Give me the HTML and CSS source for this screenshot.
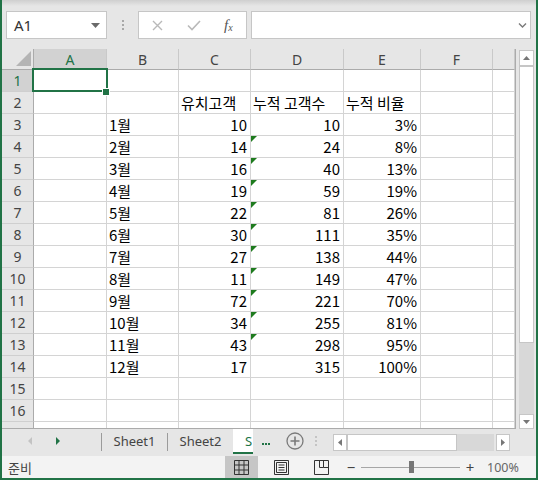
FILE: index.html
```html
<!DOCTYPE html>
<html>
<head>
  <meta charset="utf-8">
  <title>Excel - Sheet3</title>
  <link rel="stylesheet" href="styles.css">
</head>
<body>
  <div class="app">

    <div class="formula-bar">
      <div class="name-box">
        <span>A1</span>
        <svg width="9" height="5" viewBox="0 0 9 5"><path d="M0 0h9L4.5 5z" fill="#6a6a6a"/></svg>
      </div>
      <div class="grip"><i></i><i></i><i></i></div>
      <div class="fx-buttons">
        <svg class="fx-btn" width="11" height="11" viewBox="0 0 11 11"><path d="M1 1l9 9M10 1l-9 9" stroke="#b9b9b9" stroke-width="1.4" fill="none"/></svg>
        <svg class="fx-btn" width="14" height="11" viewBox="0 0 14 11"><path d="M1 5.5l4 4L13 1" stroke="#b9b9b9" stroke-width="1.6" fill="none"/></svg>
        <span class="fx-label">f<sub>x</sub></span>
      </div>
      <div class="formula-input">
        <svg width="9" height="5" viewBox="0 0 9 5"><path d="M1 0.5l3.5 3.5L8 0.5" stroke="#7a7a7a" stroke-width="1.4" fill="none"/></svg>
      </div>
    </div>

    <div class="main">
      <div class="sheet">
        <div class="row head">
          <div class="corner"><svg width="15" height="15" viewBox="0 0 15 15"><path d="M15 0V15H0z" fill="#b4b4b4"/></svg></div>
          <div class="ch sel">A</div><div class="ch">B</div><div class="ch">C</div><div class="ch">D</div><div class="ch">E</div><div class="ch">F</div><div class="ch"></div>
        </div>
        <div class="row">
          <div class="rh sel">1</div>
          <div class="c active"></div><div class="c"></div><div class="c"></div><div class="c"></div><div class="c"></div><div class="c"></div><div class="c"></div>
        </div>
        <div class="row">
          <div class="rh">2</div>
          <div class="c"></div><div class="c"></div><div class="c">유치고객</div><div class="c">누적 고객수</div><div class="c">누적 비율</div><div class="c"></div><div class="c"></div>
        </div>
        <div class="row">
          <div class="rh">3</div>
          <div class="c"></div><div class="c">1월</div><div class="c num">10</div><div class="c num">10</div><div class="c num">3%</div><div class="c"></div><div class="c"></div>
        </div>
        <div class="row">
          <div class="rh">4</div>
          <div class="c"></div><div class="c">2월</div><div class="c num">14</div><div class="c num warn">24</div><div class="c num">8%</div><div class="c"></div><div class="c"></div>
        </div>
        <div class="row">
          <div class="rh">5</div>
          <div class="c"></div><div class="c">3월</div><div class="c num">16</div><div class="c num warn">40</div><div class="c num">13%</div><div class="c"></div><div class="c"></div>
        </div>
        <div class="row">
          <div class="rh">6</div>
          <div class="c"></div><div class="c">4월</div><div class="c num">19</div><div class="c num warn">59</div><div class="c num">19%</div><div class="c"></div><div class="c"></div>
        </div>
        <div class="row">
          <div class="rh">7</div>
          <div class="c"></div><div class="c">5월</div><div class="c num">22</div><div class="c num warn">81</div><div class="c num">26%</div><div class="c"></div><div class="c"></div>
        </div>
        <div class="row">
          <div class="rh">8</div>
          <div class="c"></div><div class="c">6월</div><div class="c num">30</div><div class="c num warn">111</div><div class="c num">35%</div><div class="c"></div><div class="c"></div>
        </div>
        <div class="row">
          <div class="rh">9</div>
          <div class="c"></div><div class="c">7월</div><div class="c num">27</div><div class="c num warn">138</div><div class="c num">44%</div><div class="c"></div><div class="c"></div>
        </div>
        <div class="row">
          <div class="rh">10</div>
          <div class="c"></div><div class="c">8월</div><div class="c num">11</div><div class="c num warn">149</div><div class="c num">47%</div><div class="c"></div><div class="c"></div>
        </div>
        <div class="row">
          <div class="rh">11</div>
          <div class="c"></div><div class="c">9월</div><div class="c num">72</div><div class="c num warn">221</div><div class="c num">70%</div><div class="c"></div><div class="c"></div>
        </div>
        <div class="row">
          <div class="rh">12</div>
          <div class="c"></div><div class="c">10월</div><div class="c num">34</div><div class="c num warn">255</div><div class="c num">81%</div><div class="c"></div><div class="c"></div>
        </div>
        <div class="row">
          <div class="rh">13</div>
          <div class="c"></div><div class="c">11월</div><div class="c num">43</div><div class="c num warn">298</div><div class="c num">95%</div><div class="c"></div><div class="c"></div>
        </div>
        <div class="row">
          <div class="rh">14</div>
          <div class="c"></div><div class="c">12월</div><div class="c num">17</div><div class="c num">315</div><div class="c num">100%</div><div class="c"></div><div class="c"></div>
        </div>
        <div class="row">
          <div class="rh">15</div>
          <div class="c"></div><div class="c"></div><div class="c"></div><div class="c"></div><div class="c"></div><div class="c"></div><div class="c"></div>
        </div>
        <div class="row">
          <div class="rh">16</div>
          <div class="c"></div><div class="c"></div><div class="c"></div><div class="c"></div><div class="c"></div><div class="c"></div><div class="c"></div>
        </div>
        <div class="row">
          <div class="rh"></div>
          <div class="c"></div><div class="c"></div><div class="c"></div><div class="c"></div><div class="c"></div><div class="c"></div><div class="c"></div>
        </div>
      </div>

      <div class="vscroll">
        <div class="sb-btn"><svg width="7" height="4" viewBox="0 0 7 4"><path d="M0 4h7L3.5 0z" fill="#777"/></svg></div>
        <div class="sb-thumb"></div>
        <div class="sb-track"></div>
        <div class="sb-btn"><svg width="7" height="4" viewBox="0 0 7 4"><path d="M0 0h7L3.5 4z" fill="#777"/></svg></div>
      </div>
    </div>

    <div class="tabbar">
      <div class="tab-nav">
        <svg width="4" height="8" viewBox="0 0 4 8"><path d="M4 0v8L0 4z" fill="#c3c3c3"/></svg>
        <svg width="4" height="8" viewBox="0 0 4 8"><path d="M0 0v8l4-4z" fill="#217346"/></svg>
      </div>
      <div class="tab-sep"></div>
      <div class="tab">Sheet1</div>
      <div class="tab-sep"></div>
      <div class="tab">Sheet2</div>
      <div class="tab active">S</div>
      <div class="tab-more"><i></i><i></i><i></i></div>
      <div class="tab-add">
        <svg width="18" height="18" viewBox="0 0 18 18"><circle cx="9" cy="9" r="8" stroke="#7a7a7a" stroke-width="1.3" fill="none"/><path d="M9 4.5v9M4.5 9h9" stroke="#7a7a7a" stroke-width="1.6"/></svg>
      </div>
      <div class="grip light"><i></i><i></i><i></i></div>
      <div class="hscroll">
        <div class="sb-btn"><svg width="4" height="7" viewBox="0 0 4 7"><path d="M4 0v7L0 3.5z" fill="#777"/></svg></div>
        <div class="sb-thumb"></div>
        <div class="sb-track"></div>
        <div class="sb-btn"><svg width="4" height="7" viewBox="0 0 4 7"><path d="M0 0v7l4-3.5z" fill="#777"/></svg></div>
      </div>
    </div>

    <div class="statusbar">
      <div class="status-text">준비</div>
      <div class="view-btn on">
        <svg width="15" height="15" viewBox="0 0 15 15"><path d="M0.5 0.5h14v14h-14zM0.5 5h14M0.5 10h14M5 0.5v14M10 0.5v14" stroke="#333" fill="none"/></svg>
      </div>
      <div class="view-btn">
        <svg width="15" height="15" viewBox="0 0 15 15"><path d="M0.5 0.5h14v14h-14zM2.5 2.5h10v10h-10zM4.5 5h6M4.5 7.5h6M4.5 10h6" stroke="#333" fill="none"/></svg>
      </div>
      <div class="view-btn">
        <svg width="15" height="15" viewBox="0 0 15 15"><path d="M0.5 0.5h14v14h-14zM5.5 0.5v7h4v-7M9.5 7.5h5" stroke="#333" fill="none"/></svg>
      </div>
      <div class="zoom">
        <span class="zoom-sign">−</span>
        <div class="slider"><div class="slider-thumb"></div></div>
        <span class="zoom-sign">+</span>
        <span class="zoom-value">100%</span>
      </div>
    </div>

  </div>
</body>
</html>
```

FILE: styles.css
```css
body {
  margin: 0;
  background-color: #e6e6e6;
  font-family: "Noto Sans", "Noto Sans CJK KR", sans-serif;
  color: #444;
}

.app {
  width: 538px;
  height: 480px;
  box-sizing: border-box;
  border-left: 2px solid #217346;
  border-right: 2px solid #217346;
  border-bottom: 2px solid #217346;
  background-color: #e6e6e6;
  display: flex;
  flex-direction: column;
  overflow: hidden;
}

/* formula bar */

.formula-bar {
  height: 49px;
  flex: none;
  display: flex;
  align-items: flex-start;
  padding-top: 11px;
  box-sizing: border-box;
  background: linear-gradient(#cfcfcf, #e6e6e6 6px);
}

.name-box {
  margin-left: 4px;
  width: 101px;
  height: 28px;
  box-sizing: border-box;
  border: 1px solid #c6c6c6;
  background-color: #fff;
  display: flex;
  align-items: center;
  justify-content: space-between;
  padding: 0 6px 0 7px;
  font-size: 15px;
  color: #333;
}

.grip {
  width: 31px;
  height: 28px;
  display: flex;
  flex-direction: column;
  align-items: center;
  justify-content: center;
  gap: 2px;
}

.grip i {
  width: 2px;
  height: 2px;
  background-color: #a8a8a8;
}

.grip.light i {
  background-color: #c4c4c4;
}

.fx-buttons {
  width: 109px;
  height: 28px;
  box-sizing: border-box;
  border: 1px solid #c6c6c6;
  background-color: #fff;
  display: flex;
  align-items: center;
  padding-left: 13px;
}

.fx-btn {
  margin-right: 24px;
}

.fx-label {
  margin-left: -1px;
  font-family: "Liberation Serif", serif;
  font-style: italic;
  font-size: 15px;
  color: #555;
}

.fx-label sub {
  font-size: 10px;
  vertical-align: -1px;
}

.formula-input {
  margin-left: 4px;
  width: 280px;
  height: 28px;
  box-sizing: border-box;
  border: 1px solid #c6c6c6;
  background-color: #fff;
  display: flex;
  align-items: center;
  justify-content: flex-end;
  padding-right: 3px;
}

/* sheet grid */

.main {
  height: 380px;
  flex: none;
  display: flex;
}

.sheet {
  width: 514px;
  height: 380px;
  box-sizing: border-box;
  border-right: 1px solid #ababab;
  border-bottom: 1px solid #ababab;
  background-color: #fff;
  overflow: hidden;
}

.row {
  display: grid;
  grid-template-columns: 32px 73px 72px 72px 93px 77px 72px 22px;
  height: 22px;
}

.row.head {
  height: 21px;
}

.corner,
.ch,
.rh {
  background-color: #e6e6e6;
  box-sizing: border-box;
  font-size: 14px;
  color: #444;
  display: flex;
  align-items: center;
  justify-content: center;
}

.corner {
  border-right: 1px solid #ababab;
  border-bottom: 1px solid #ababab;
  justify-content: flex-end;
  align-items: flex-end;
  padding: 0 2px 3px 0;
}

.ch {
  border-right: 1px solid #c9c9c9;
  border-bottom: 1px solid #ababab;
}

.rh {
  border-right: 1px solid #ababab;
  border-bottom: 1px solid #cfcfcf;
}

.ch.sel,
.rh.sel {
  background-color: #d2d2d2;
  color: #217346;
}

.c {
  position: relative;
  box-sizing: border-box;
  border-right: 1px solid #d4d4d4;
  border-bottom: 1px solid #d4d4d4;
  padding: 0 3px 0 2px;
  font-family: "Noto Sans CJK KR", sans-serif;
  font-size: 15px;
  color: #000;
  white-space: nowrap;
  display: flex;
  align-items: center;
}

.c.num {
  justify-content: flex-end;
}

.c.warn::before {
  content: "";
  position: absolute;
  top: 0;
  left: 0;
  border-top: 6px solid #1e7b1e;
  border-right: 6px solid transparent;
}

.c.active::after {
  content: "";
  position: absolute;
  top: -2px;
  left: -2px;
  right: -2px;
  bottom: -1px;
  border: 2px solid #217346;
  z-index: 2;
}

.c.active::before {
  content: "";
  position: absolute;
  right: -4px;
  bottom: -5px;
  width: 6px;
  height: 6px;
  background-color: #217346;
  border: 1px solid #fff;
  z-index: 3;
}

/* scrollbars */

.vscroll {
  width: 20px;
  display: flex;
  flex-direction: column;
  padding: 1px 2px 0 3px;
  box-sizing: border-box;
}

.sb-btn {
  flex: none;
  width: 15px;
  height: 16px;
  box-sizing: border-box;
  border: 1px solid #c6c6c6;
  background-color: #fff;
  display: flex;
  align-items: center;
  justify-content: center;
}

.vscroll .sb-thumb {
  height: 277px;
  flex: none;
  box-sizing: border-box;
  border: 1px solid #c6c6c6;
  background-color: #fff;
}

.vscroll .sb-track {
  flex: 1;
  background-color: #d8d8d8;
}

.vscroll .sb-btn:last-child {
  height: 15px;
}

/* sheet tabs */

.tabbar {
  height: 27px;
  flex: none;
  display: flex;
  align-items: flex-start;
  background-color: #e6e6e6;
}

.tab-nav {
  width: 99px;
  height: 24px;
  display: flex;
  align-items: center;
  gap: 24px;
  padding-left: 26px;
  box-sizing: border-box;
}

.tab-sep {
  width: 1px;
  height: 18px;
  margin-top: 4px;
  background-color: #9b9b9b;
}

.tab {
  width: 65px;
  height: 24px;
  display: flex;
  align-items: center;
  justify-content: center;
  font-size: 13px;
  color: #444;
}

.tab.active {
  width: 20px;
  height: 25px;
  box-sizing: border-box;
  justify-content: flex-start;
  padding-left: 12px;
  overflow: hidden;
  background-color: #fff;
  border-bottom: 2px solid #217346;
  color: #217346;
}

.tab-more {
  width: 24px;
  height: 24px;
  display: flex;
  align-items: center;
  gap: 1px;
  padding: 6px 0 0 9px;
  box-sizing: border-box;
}

.tab-more i {
  width: 2px;
  height: 2px;
  background-color: #217346;
}

.tab-add {
  width: 35px;
  height: 24px;
  display: flex;
  align-items: center;
  padding-left: 9px;
  box-sizing: border-box;
}

.tabbar .grip {
  width: 21px;
  height: 24px;
  align-items: flex-start;
  padding-left: 3px;
  box-sizing: border-box;
}

.hscroll {
  width: 177px;
  height: 17px;
  margin-top: 5px;
  display: flex;
}

.hscroll .sb-btn {
  width: 14px;
  height: 17px;
}

.hscroll .sb-thumb {
  width: 110px;
  box-sizing: border-box;
  border: 1px solid #c6c6c6;
  background-color: #fff;
}

.hscroll .sb-track {
  flex: 1;
  background-color: #d8d8d8;
  margin-right: 2px;
}

/* status bar */

.statusbar {
  flex: 1;
  display: flex;
  align-items: center;
  background-color: #f3f3f3;
}

.status-text {
  width: 223px;
  padding-left: 6px;
  box-sizing: border-box;
  font-family: "Noto Sans CJK KR", sans-serif;
  font-size: 13px;
  color: #444;
}

.view-btn {
  width: 33px;
  height: 22px;
  display: flex;
  align-items: center;
  justify-content: center;
  margin-right: 7px;
}

.view-btn.on {
  background-color: #c6c6c6;
}

.zoom {
  display: flex;
  align-items: center;
  margin-left: 1px;
}

.zoom-sign {
  font-size: 15px;
  color: #444;
  width: 10px;
  text-align: center;
}

.slider {
  position: relative;
  width: 99px;
  height: 1px;
  margin: 0 5px;
  background-color: #a6a6a6;
}

.slider-thumb {
  position: absolute;
  left: 48px;
  top: -6px;
  width: 5px;
  height: 12px;
  background-color: #777;
}

.zoom-value {
  margin-left: 12px;
  font-size: 12.5px;
  color: #666;
}
```
